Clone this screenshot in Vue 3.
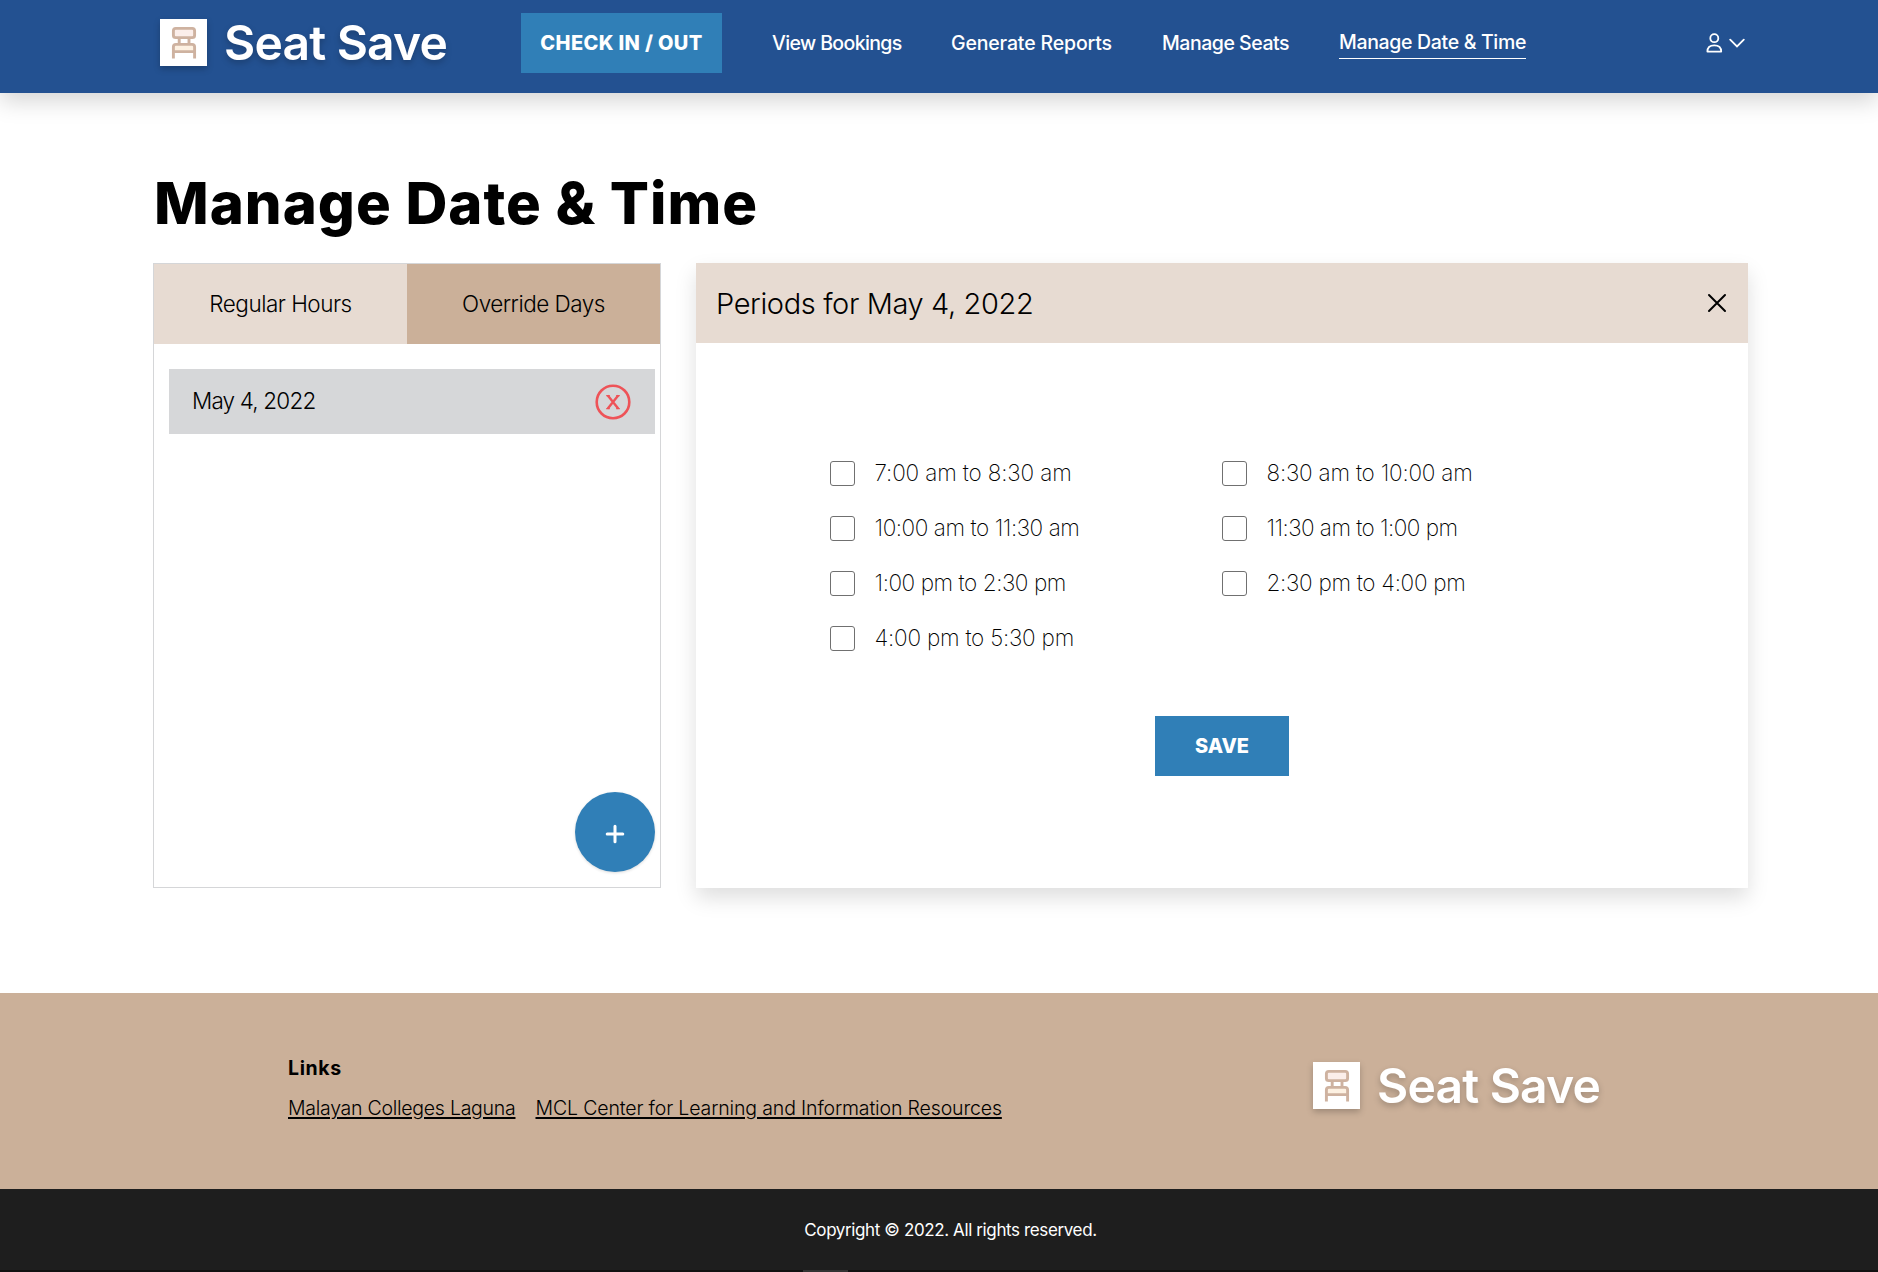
<script setup>
import { h } from 'vue'

const Logo = () =>
  h('div', { class: 'logo' }, [
    h('svg', { class: 'logo-mark', viewBox: '0 0 47 47', width: 47, height: 47 }, [
      h('rect', { width: 47, height: 47, fill: '#fff' }),
      h('rect', { x: 14, y: 25.5, width: 20, height: 6.5, fill: '#fdf1e2' }),
      h('g', { fill: 'none', stroke: '#ceb2a0', 'stroke-width': 2.9 }, [
        h('rect', { x: 13.4, y: 9.4, width: 21.2, height: 9.2, rx: 2.4, fill: '#fbeeea' }),
        h('path', { d: 'M19.2 19v6M29 19v6' }),
        h('path', { d: 'M13.4 39.4V28a2.6 2.6 0 0 1 2.6-2.6h16a2.6 2.6 0 0 1 2.6 2.6V39.4M13.4 32.6h21.2' }),
      ]),
    ]),
    h('span', { class: 'logo-text' }, 'Seat Save'),
  ])

const nav = [
  { label: 'View Bookings', ls: -0.62, w: 129 },
  { label: 'Generate Reports', ls: -0.15, w: 161 },
  { label: 'Manage Seats', ls: -0.47, w: 127 },
  { label: 'Manage Date & Time', ls: -0.33, w: 187, active: true },
]

const periods = [
  { label: '7:00 am to 8:30 am', ls: -0.14 },
  { label: '8:30 am to 10:00 am', ls: -0.21 },
  { label: '10:00 am to 11:30 am', ls: -0.43 },
  { label: '11:30 am to 1:00 pm', ls: -0.54 },
  { label: '1:00 pm to 2:30 pm', ls: -0.43 },
  { label: '2:30 pm to 4:00 pm', ls: -0.3 },
  { label: '4:00 pm to 5:30 pm', ls: -0.22 },
]
</script>

<template>
  <div class="page">
    <header class="topbar">
      <Logo />
      <button class="btn check">CHECK IN / OUT</button>
      <nav class="nav">
        <a
          v-for="n in nav"
          :key="n.label"
          :class="{ active: n.active }"
          :style="{ letterSpacing: n.ls + 'px', width: n.w + 'px' }"
        >{{ n.label }}</a>
      </nav>
      <div class="user">
        <svg width="17" height="20" viewBox="0 0 17 20" fill="none" stroke="#fff" stroke-width="1.8">
          <circle cx="8.3" cy="5.2" r="4" />
          <path d="M1.4 18.6c0-4 2.8-6.3 6.9-6.3s6.9 2.3 6.9 6.3z" stroke-linejoin="round" />
        </svg>
        <svg width="16" height="10" viewBox="0 0 16 10" fill="none" stroke="#fff" stroke-width="1.8" stroke-linecap="round">
          <path d="M1.2 1.6 8 8.4l6.8-6.8" />
        </svg>
      </div>
    </header>

    <main class="main">
      <h1>Manage Date &amp; Time</h1>
      <div class="columns">
        <section class="days">
          <div class="tabs">
            <div class="tab">Regular Hours</div>
            <div class="tab on">Override Days</div>
          </div>
          <div class="day">
            <span>May 4, 2022</span>
            <svg width="36" height="36" viewBox="0 0 36 36" fill="none" stroke="#ee5358">
              <circle cx="18" cy="18" r="16.3" stroke-width="2.6" />
              <path d="M11.2 11.6h3.6M21.2 11.6h3.6M11.2 24.6h3.6M21.2 24.6h3.6" stroke-width="1.3" />
              <path d="M12.8 11.6 23.2 24.6M23.2 11.6 12.8 24.6" stroke-width="2.4" />
            </svg>
          </div>
          <button class="add" aria-label="Add">
            <svg width="20" height="20" viewBox="0 0 20 20" stroke="#fff" stroke-width="3" stroke-linecap="round">
              <path d="M10 2.2v15.6M2.2 10h15.6" />
            </svg>
          </button>
        </section>

        <section class="periods">
          <div class="periods-head">
            <span>Periods for May 4, 2022</span>
            <svg width="20" height="20" viewBox="0 0 20 20" stroke="#000" stroke-width="2" stroke-linecap="round">
              <path d="M2 2l16 16M18 2 2 18" />
            </svg>
          </div>
          <div class="grid">
            <label v-for="p in periods" :key="p.label">
              <i class="box"></i>
              <span :style="{ letterSpacing: p.ls + 'px' }">{{ p.label }}</span>
            </label>
          </div>
          <button class="btn save">SAVE</button>
        </section>
      </div>
    </main>

    <footer>
      <div class="foot">
        <div class="links">
          <strong>Links</strong>
          <div class="link-row">
            <a class="mcl">Malayan Colleges Laguna</a>
            <a class="clir">MCL Center for Learning and Information Resources</a>
          </div>
        </div>
        <Logo />
      </div>
      <div class="copy">Copyright © 2022. All rights reserved.</div>
      <div class="edge"><i></i></div>
    </footer>
  </div>
</template>

<style>
body {
  margin: 0;
}
.logo {
  display: flex;
  align-items: center;
  height: 47px;
  filter: drop-shadow(0 3px 3px rgba(0, 0, 0, 0.22));
}
.logo-text {
  width: 223px;
  margin-left: 17px;
  font-size: 48px;
  line-height: 47px;
  font-weight: 570;
  letter-spacing: -0.8px;
  color: #fff;
  white-space: nowrap;
}
</style>

<style scoped>
.page {
  width: 1878px;
  height: 1272px;
  overflow: hidden;
  display: flex;
  flex-direction: column;
  font-family: Inter, "Liberation Sans", sans-serif;
  color: #000;
  background: #fff;
}
.topbar {
  box-sizing: border-box;
  height: 93px;
  padding: 0 133px 7px 160px;
  display: flex;
  align-items: center;
  background: #235191;
  box-shadow: 0 8px 22px rgba(0, 0, 0, 0.17);
}
.topbar .logo {
  width: 361px;
  margin-bottom: 1px;
}
.btn {
  border: 0;
  padding: 0;
  height: 60px;
  font-family: inherit;
  font-size: 20px;
  font-weight: 800;
  color: #fff;
  background: #307fb7;
}
.check {
  width: 201px;
  letter-spacing: 0.35px;
}
.nav {
  display: flex;
  align-items: center;
  gap: 50px;
  margin-left: 50px;
  font-size: 19.5px;
  font-weight: 500;
  color: #fff;
}
.nav a {
  line-height: 30px;
  white-space: nowrap;
}
.nav .active {
  padding-bottom: 1px;
  border-bottom: 1px solid #fff;
}
.user {
  margin-left: auto;
  display: flex;
  align-items: center;
  gap: 6px;
}
.main {
  height: 900px;
  padding: 0 130px 0 153px;
}
h1 {
  margin: 0;
  height: 170px;
  padding: 50px 0 0 1px;
  box-sizing: border-box;
  line-height: 120px;
  font-size: 58px;
  font-weight: 760;
  letter-spacing: 1px;
}
.columns {
  display: flex;
  gap: 35px;
  height: 625px;
}
.days {
  box-sizing: border-box;
  width: 508px;
  border: 1px solid #d5d6d8;
  display: flex;
  flex-direction: column;
  font-size: 22.5px;
  font-weight: 300;
}
.tabs {
  display: flex;
  height: 80px;
}
.tab {
  flex: 1;
  line-height: 80px;
  text-align: center;
  letter-spacing: -0.5px;
  background: #e7dbd2;
}
.tab.on {
  background: #cbb099;
}
.day {
  box-sizing: border-box;
  height: 65px;
  margin: 25px 5px 0 15px;
  padding: 0 24px 0 23px;
  display: flex;
  align-items: center;
  justify-content: space-between;
  letter-spacing: -0.83px;
  background: #d6d7d9;
}
.day span {
  padding-bottom: 2px;
}
.add {
  width: 80px;
  height: 80px;
  margin: auto 5px 15px auto;
  padding: 3px 0 0;
  border: 0;
  border-radius: 50%;
  background: #307fb7;
  box-shadow: 0 1px 3px rgba(0, 0, 0, 0.14);
  display: flex;
  align-items: center;
  justify-content: center;
}
.periods {
  width: 1052px;
  display: flex;
  flex-direction: column;
  align-items: center;
  background: #fff;
  box-shadow: 0 10px 20px rgba(0, 0, 0, 0.13);
}
.periods-head {
  box-sizing: border-box;
  width: 100%;
  height: 80px;
  padding: 0 21px 0 20px;
  display: flex;
  align-items: center;
  justify-content: space-between;
  font-size: 29px;
  font-weight: 300;
  letter-spacing: -0.37px;
  background: #e7dbd2;
}
.grid {
  display: grid;
  grid-template-columns: 392px 392px;
  grid-auto-rows: 55px;
  margin: 103px 0 50px;
}
.grid label {
  display: flex;
  align-items: center;
  gap: 19.5px;
  font-size: 22.5px;
  font-weight: 200;
  white-space: nowrap;
}
.grid span {
  padding-bottom: 2px;
}
.box {
  box-sizing: border-box;
  width: 25px;
  height: 25px;
  border: 1px solid #707070;
  border-radius: 3px;
}
.save {
  width: 134px;
}
.foot {
  box-sizing: border-box;
  height: 196px;
  padding: 55px 278px 0 288px;
  display: flex;
  justify-content: space-between;
  background: #cbb099;
}
.links {
  font-size: 19.5px;
  line-height: 40px;
  font-weight: 300;
}
.links strong {
  display: block;
  font-weight: 700;
  letter-spacing: 0.6px;
}
.link-row {
  display: flex;
  gap: 20px;
}
.link-row a {
  text-decoration: underline;
  text-decoration-thickness: 2px;
  text-underline-offset: 2px;
}
.mcl {
  letter-spacing: -0.26px;
}
.clir {
  letter-spacing: -0.14px;
}
.foot .logo {
  margin-top: 14px;
}
.copy {
  box-sizing: border-box;
  height: 81px;
  line-height: 81px;
  padding: 1px 0 0 23px;
  text-align: center;
  font-size: 17px;
  letter-spacing: -0.38px;
  color: #fff;
  background: #1e1e1e;
}
.edge {
  height: 2px;
  display: flex;
  padding-left: 803px;
  background: #111;
}
.edge i {
  width: 45px;
  background: #333;
}
</style>
